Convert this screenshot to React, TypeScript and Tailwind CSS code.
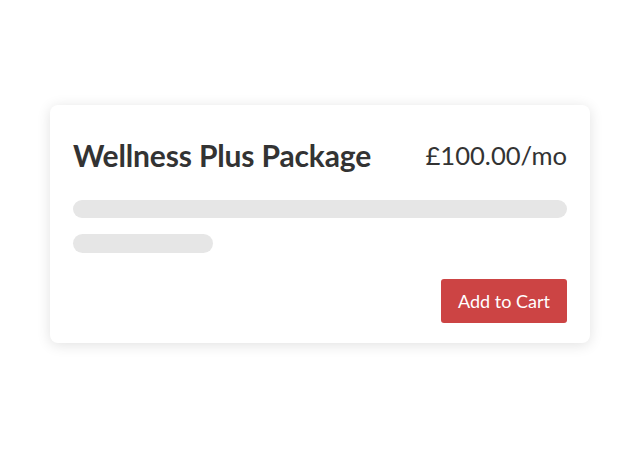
import React from "react";

const ProductCard: React.FC = () => {
  return (
    <div className="rounded-lg bg-white px-[23px] pt-[30px] pb-[20px] shadow-[0_2px_14px_rgba(0,0,0,0.12)]">
      <div className="flex items-center justify-between">
        <h2 className="text-[30px] leading-[40px] font-bold tracking-[-0.15px] text-[#333333]">Wellness Plus Package</h2>
        <span className="text-[25.6px] leading-[40px] text-[#333333]">£100.00/mo</span>
      </div>

      {/* placeholder lines */}
      <div className="mt-[25px] h-[18px] w-full rounded-full bg-[#e6e6e6]" />
      <div className="mt-[16px] h-[19px] w-[140px] rounded-full bg-[#e6e6e6]" />

      <div className="mt-[26px] flex justify-end">
        <button className="h-[44px] w-[126px] rounded-[3px] bg-[#cc4444] text-[18px] text-white">
          Add to Cart
        </button>
      </div>
    </div>
  );
};

export default function App() {
  return (
    <div
      className="h-[471px] w-full bg-white px-[50px] pt-[105px]"
      style={{ fontFamily: "Lato, 'Noto Sans', sans-serif" }}
    >
      <ProductCard />
    </div>
  );
}
